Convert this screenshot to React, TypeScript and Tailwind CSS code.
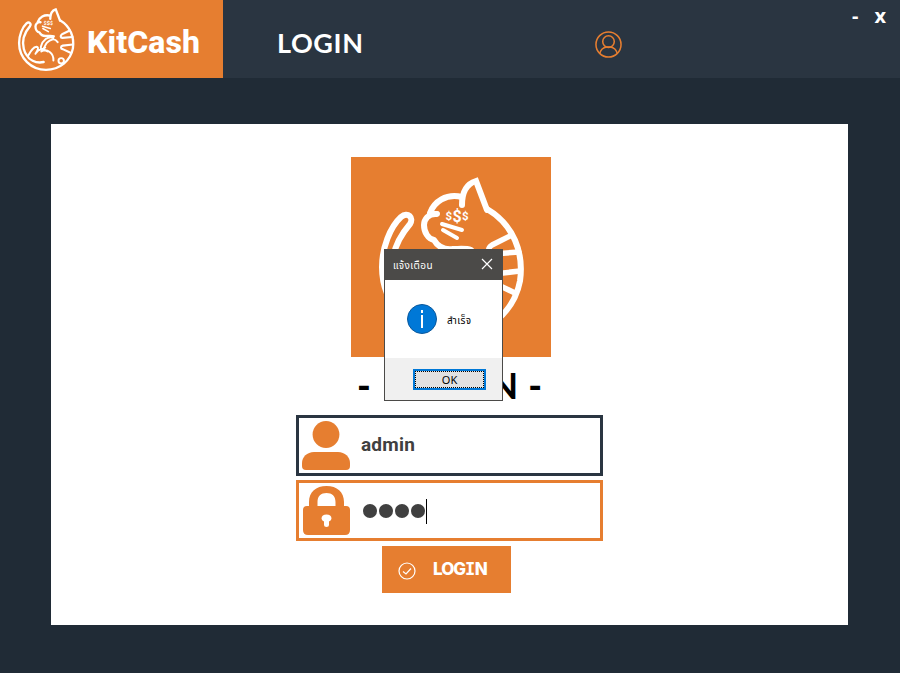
import React from "react";

function CatLogo({ className }: { className: string }) {
  return (
    <svg viewBox="0 0 200 200" className={className} fill="none" stroke="#fff" strokeWidth="6" strokeLinecap="round" strokeLinejoin="round">
      <path d="M136 52C163 68 173 96 169 124C163 155 136 179 100 179C62 179 31 149 31 110C31 91 39 70 50 60C57 54 63 61 59 67C47 81 37 101 43 125C45 133 48 139 51 142C55 151 72 164 94 159" />
      <path d="M111 48C111 35 115 27 125 24L136 53" strokeLinejoin="miter" />
      <path d="M111 40C95 36 83 45 79 56M86 57C77 56 73 63 73 68C73 75 77 82 83 83C87 90 94 93 102 92C108 92 115 91 120 93" />
      <path d="M91 67L111 73M92 73L106 81" strokeWidth="4" />
      <path d="M161 78L141 88C136 91 137 97 142 97L168 95M169 114L143 117C137 118 137 125 143 126L164 136" strokeWidth="5.5" />
      <path d="M130 108C122 97 111 100 102 110C98 115 97 120 94 124M119 97C105 91 91 104 87 119C85 130 94 125 98 122" strokeWidth="5" />
      <path d="M54 143C61 131 66 121 76 120C83 121 78 130 73 138M88 132C103 123 120 137 119 155M76 134C80 126 91 124 104 132" strokeWidth="5" />
      <circle cx="139" cy="156" r="7" strokeWidth="5" />
      <g fill="#fff" stroke="none" className="[font-family:'Roboto',sans-serif] font-bold">
        <text x="94.500" y="63" fontSize="11.500">$</text>
        <text x="101.500" y="64.500" fontSize="16">$</text>
        <text x="111" y="63" fontSize="11.500">$</text>
      </g>
    </svg>
  );
}

function Header() {
  return (
    <header className="flex h-[78px] bg-[#2a3541] text-white">
      <div className="flex h-full w-[223px] items-center bg-[#e67e30] pl-[7px]">
        <CatLogo className="size-[78px] shrink-0" />
        <span className="ml-[2px] mt-1.5 font-['Roboto',sans-serif] text-[32px] font-extrabold leading-none tracking-[0.1px]">KitCash</span>
      </div>
      <h1 className="ml-[54px] mt-[25px] w-[318px] font-['Lato',sans-serif] text-[27px] font-bold leading-[36px] tracking-[0.6px]">LOGIN</h1>
      <svg viewBox="0 0 28 28" className="mt-[31px] size-[27px]" fill="none" stroke="#e67e30" strokeWidth="1.6">
        <circle cx="14" cy="14" r="13" />
        <circle cx="14" cy="11" r="6" />
        <path d="M5 23C6 19 9 17 12 16.500H16C19 17 22 19 23 23" />
      </svg>
      <div className="ml-auto flex gap-[16px] pr-[14px] pt-1 font-['Noto_Sans',sans-serif] text-[20px] font-bold leading-6">
        <button className="h-6">-</button>
        <button className="h-6">x</button>
      </div>
    </header>
  );
}

function Dialog() {
  return (
    <div role="dialog" className="absolute left-[384px] top-[249px] flex h-[152px] w-[119px] flex-col border border-[#4b4a48] bg-white text-black">
      <div className="flex h-[30px] shrink-0 items-center justify-between bg-[#4b4a48] pl-2 pr-[9px] text-white">
        <span className="mt-0.5 font-['Noto_Sans_Thai','Tahoma','Noto_Sans',sans-serif] text-[10px] leading-none tracking-[0.4px]">แจ้งเตือน</span>
        <svg viewBox="0 0 12 12" className="-mt-0.5 size-3" stroke="currentColor" strokeWidth="1.2"><path d="M1 1L11 11M11 1L1 11" /></svg>
      </div>
      <div className="flex flex-1 items-center pl-[22px]">
        <svg viewBox="0 0 30 30" className="size-[30px]">
          <circle cx="15" cy="15" r="14.500" fill="#0078d7" stroke="#0b589b" />
          <path d="M15 6V9M15 11V24" stroke="#fff" strokeWidth="2" />
        </svg>
        <span className="ml-[10px] mt-1 font-['Noto_Sans_Thai','Tahoma','Noto_Sans',sans-serif] text-[10px] leading-none tracking-[0.4px]">สำเร็จ</span>
      </div>
      <div className="flex h-[42px] shrink-0 items-center justify-end bg-[#f0f0f0] pr-4">
        <button className="h-[21px] w-[73px] border-2 border-[#0078d7] bg-[#e1e1e1] font-['Noto_Sans',sans-serif] text-[11px] leading-none">
          <span className="flex size-full items-center justify-center border border-dotted border-black">OK</span>
        </button>
      </div>
    </div>
  );
}

export default function App() {
  return (
    <div className="relative h-[673px] w-[900px] overflow-hidden bg-[#202b36]">
      <Header />
      <main className="ml-[51px] mt-[46px] flex h-[501px] w-[797px] flex-col items-center bg-white pt-[33px]">
        <div className="ml-[3px] size-[200px] shrink-0 bg-[#e67e30]">
          <CatLogo className="size-full" />
        </div>
        <h2 className="mt-[8px] flex h-[40px] w-[185px] items-center justify-between whitespace-nowrap font-['Lato',sans-serif] text-[37px] font-black leading-[40px] text-black">
          <span>-</span>
          <span className="ml-[11px] font-bold tracking-[4px]">LOGIN</span>
          <span>-</span>
        </h2>
        <div className="mt-[10px] flex h-[61px] w-[307px] shrink-0 items-center border-3 border-[#2a3541] pl-[3px]">
          <svg viewBox="0 0 48 50" className="h-[50px] w-12" fill="#e67e30">
            <circle cx="24" cy="13.500" r="13.400" />
            <path d="M12 31H36C43 31 48 36 48 42V45Q48 49 44 49H4Q0 49 0 45V42C0 36 5 31 12 31Z" />
          </svg>
          <span className="-mt-0.5 ml-[11px] font-['Roboto',sans-serif] text-[19px] font-bold leading-none tracking-[0.2px] text-[#404040]">admin</span>
        </div>
        <div className="mt-1 flex h-[61px] w-[307px] shrink-0 items-center border-3 border-[#e67e30] pl-1">
          <svg viewBox="0 0 47 50" className="-mt-0.5 h-[50px] w-[47px]" fill="#e67e30">
            <path fillRule="evenodd" d="M6 21V17C6 7 13 1 23.500 1S41 7 41 17V21H43Q47 21 47 25V45Q47 50 42 50H5Q0 50 0 45V25Q0 21 4 21ZM14.500 21H32.500V17C32.500 11 29 8 23.500 8S14.500 11 14.500 17ZM21 36.500V40Q21 42 23.500 42T26 40V36.500Q28.500 35.500 28.500 33.500C28.500 31 26.500 29.500 23.500 29.500S18.500 31 18.500 33.500Q18.500 35.500 21 36.500Z" />
          </svg>
          <div className="ml-[13px] flex items-center gap-0.5">
            {[0, 1, 2, 3].map((n) => <span key={n} className="size-[14px] rounded-full bg-[#404040]" />)}
          </div>
          <span className="ml-px mt-0.5 h-[25px] w-px bg-black" />
        </div>
        <button className="mr-[6px] mt-[5px] flex h-[47px] w-[129px] shrink-0 items-center bg-[#e67e30] pl-4 text-white">
          <svg viewBox="0 0 18 18" className="mt-[3px] size-[18px]" fill="none" stroke="currentColor" strokeWidth="1.2">
            <circle cx="9" cy="9" r="8" /><path d="M5 9.500L8 12L13 6.500" />
          </svg>
          <span className="ml-[17px] whitespace-nowrap font-['Inter',sans-serif] text-[17px] font-extrabold leading-none tracking-[-1px]">LOG<span className="font-['DejaVu_Sans_Mono',monospace] font-bold tracking-[-0.5px]">I</span>N</span>
        </button>
      </main>
      <Dialog />
    </div>
  );
}
